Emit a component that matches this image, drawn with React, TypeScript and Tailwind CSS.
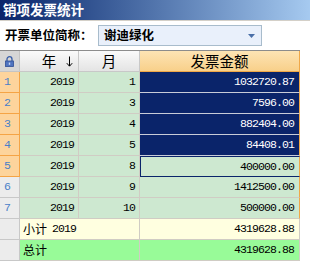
const rows = [
  { n: 1, year: 2019, month: 1, amount: '1032720.87', sel: true },
  { n: 2, year: 2019, month: 3, amount: '7596.00', sel: true },
  { n: 3, year: 2019, month: 4, amount: '882404.00', sel: true },
  { n: 4, year: 2019, month: 5, amount: '84408.01', sel: true },
  { n: 5, year: 2019, month: 8, amount: '400000.00', focus: true },
  { n: 6, year: 2019, month: 9, amount: '1412500.00' },
  { n: 7, year: 2019, month: 10, amount: '500000.00' },
];

const cjk = "font-['Noto_Sans_CJK_SC','Noto_Sans',sans-serif]";
const mono = "font-['Liberation_Mono','Noto_Sans_CJK_SC',monospace] text-[11.5px] tracking-[-0.9px]";

function LockIcon() {
  return (
    <svg width="9" height="11" viewBox="0 0 9 11">
      <path d="M2 5V3.2a2.5 2.5 0 0 1 5 0V5" fill="none" stroke="#3a5fa8" strokeWidth="1.3" />
      <rect x="0.5" y="5" width="8" height="5.5" fill="#4f74c0" stroke="#2f4f96" strokeWidth="0.8" />
      <rect x="3.8" y="6.6" width="1.4" height="2.2" fill="#c8d8f4" />
    </svg>
  );
}

function SortArrow() {
  return (
    <svg width="7" height="11" viewBox="0 0 7 11">
      <path d="M3.5 0.5V10" stroke="#000" strokeWidth="1" />
      <path d="M0.8 7.2L3.5 10.2L6.2 7.2" fill="none" stroke="#000" strokeWidth="1" />
    </svg>
  );
}

export default function App() {
  return (
    <div className={`w-[310px] h-[269px] bg-white overflow-hidden ${cjk}`}>
      <div className="h-[20px] bg-gradient-to-r from-[#0a246a] to-[#a6caf0] px-[3px] flex items-center text-white font-bold text-[13.5px] leading-none">
        销项发票统计
      </div>
      <div className="h-[30px] border-t border-[#d4d0c8] flex items-center">
        <span className="pl-[5px] w-[98px] font-bold text-[12.5px] text-black">开票单位简称：</span>
        <div className="w-[164px] h-[21px] border border-[#a8bccc] bg-[#e9f0fb] flex items-center justify-between pl-[5px] pr-[6px]">
          <span className="font-bold text-[12.5px] text-black">谢迪绿化</span>
          <svg width="7" height="4" viewBox="0 0 7 4">
            <path d="M0 0H7L3.5 4Z" fill="#4a6fa8" />
          </svg>
        </div>
      </div>
      <div className="w-[300px] border-t border-[#8c8c8c] grid grid-cols-[20px_59px_61px_160px] auto-rows-[21px] text-black">
        <div className="bg-[#d6d6d6] border-r border-b border-[#c4c4c4] flex items-center justify-center">
          <LockIcon />
        </div>
        <div className="bg-gradient-to-b from-[#fafafa] to-[#e4e4e4] border-r border-b border-[#c8c8c8] flex items-center text-[14.5px] relative">
          <span className="w-full text-center">年</span>
          <span className="absolute right-[5px] top-[5px] flex">
            <SortArrow />
          </span>
        </div>
        <div className="bg-gradient-to-b from-[#fafafa] to-[#e4e4e4] border-r border-b border-[#c8c8c8] flex items-center justify-center text-[14.5px]">
          月
        </div>
        <div className="bg-gradient-to-b from-[#fde4b4] to-[#f8d08a] border-r border-b border-[#f0a848] flex items-center justify-center text-[14.5px]">
          发票金额
        </div>

        {rows.map((r) => {
          const hdr = r.n <= 5;
          return [
            <div
              key={`h${r.n}`}
              className={`${hdr ? 'bg-[#fdd49c] border-r border-b border-[#f5a445]' : 'bg-[#ececec] border-r border-b border-[#c8c8c8]'} flex items-center pl-[4px] ${mono} text-[#4a80c8]`}
            >
              {r.n}
            </div>,
            <div key={`y${r.n}`} className={`bg-[#cde8d0] border-r border-b border-[#d0ccc4] flex items-center justify-end pr-[4px] ${mono}`}>
              {r.year}
            </div>,
            <div key={`m${r.n}`} className={`bg-[#cde8d0] border-r border-b border-[#d0ccc4] flex items-center justify-end pr-[4px] ${mono}`}>
              {r.month}
            </div>,
            <div
              key={`a${r.n}`}
              className={`${r.sel ? 'bg-[#0a246a] text-white border-b border-[#c8ccd8]' : r.focus ? 'bg-[#cde8d0] border border-[#0a246a]' : 'bg-[#cde8d0] border-b border-[#d0ccc4]'} border-r-[#f0a848] border-r flex items-center justify-end pr-[5px] ${mono}`}
            >
              {r.amount}
            </div>,
          ];
        })}

        <div className="bg-[#ececec] border-r border-b border-[#c8c8c8]" />
        <div className="col-span-2 bg-[#ffffe0] border-r border-b border-[#d0ccc4] flex items-center pl-[3px] gap-[5px]">
          <span className="text-[12px]">小计</span>
          <span className={mono}>2019</span>
        </div>
        <div className={`bg-[#ffffe0] border-r border-b border-[#d0ccc4] flex items-center justify-end pr-[5px] ${mono}`}>
          4319628.88
        </div>

        <div className="bg-[#ececec] border-r border-b border-[#c8c8c8]" />
        <div className="col-span-2 bg-[#98fb98] border-r border-b border-[#d0ccc4] flex items-center pl-[3px] text-[12px]">
          总计
        </div>
        <div className={`bg-[#98fb98] border-r border-b border-[#d0ccc4] flex items-center justify-end pr-[5px] ${mono}`}>
          4319628.88
        </div>
      </div>
    </div>
  );
}
